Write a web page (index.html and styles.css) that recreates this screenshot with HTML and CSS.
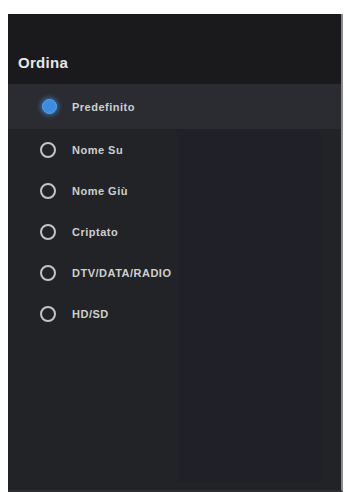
FILE: index.html
```html
<!DOCTYPE html>
<html lang="it">
<head>
<meta charset="utf-8">
<link rel="stylesheet" href="styles.css">
</head>
<body>
<div class="panel">
  <div class="header"><span class="title">Ordina</span></div>
  <div class="body">
    <div class="shade"></div>
    <ul class="list">
      <li class="row selected"><span class="radio on"></span><span class="label">Predefinito</span></li>
      <li class="row"><span class="radio"></span><span class="label">Nome Su</span></li>
      <li class="row"><span class="radio"></span><span class="label">Nome Giù</span></li>
      <li class="row"><span class="radio"></span><span class="label">Criptato</span></li>
      <li class="row"><span class="radio"></span><span class="label">DTV/DATA/RADIO</span></li>
      <li class="row"><span class="radio"></span><span class="label">HD/SD</span></li>
    </ul>
  </div>
</div>
</body>
</html>
```
FILE: styles.css
```css
html, body {
  margin: 0;
  padding: 0;
  background: #ffffff;
  height: 100%;
}
body {
  font-family: "Liberation Sans", Arial, sans-serif;
  padding: 14px 5px 0 8px;
  box-sizing: border-box;
}
.panel {
  height: 476px;
  background: #222326;
  border-right: 2px solid #8a8b8f;
  border-bottom: 2px solid #2c2d30;
  display: flex;
  flex-direction: column;
}
.header {
  height: 70px;
  background: #1a1a1d;
  display: flex;
  align-items: flex-end;
  padding: 0 0 13px 10px;
  box-sizing: border-box;
}
.title {
  color: #e6e6e6;
  font-weight: bold;
  font-size: 15px;
  letter-spacing: 0.3px;
}
.body {
  flex: 1;
  position: relative;
}
.shade {
  position: absolute;
  left: 169px;
  right: 20px;
  top: 0;
  bottom: 8px;
  background: #202128;
}
.list {
  position: relative;
  list-style: none;
  margin: 0;
  padding: 0;
}
.row {
  height: 41px;
  display: flex;
  align-items: center;
  padding-left: 32px;
}
.row.selected {
  height: 45px;
  background: #2a2c31;
}
.radio {
  width: 12px;
  height: 12px;
  border: 2.5px solid #c4c4c4;
  border-radius: 50%;
  flex: none;
}
.radio.on {
  width: 13px;
  height: 13px;
  margin: 2px;
  border: 1px solid #5aa5f0;
  background: #3c8de0;
  box-shadow: 0 0 4px 2px rgba(60, 140, 225, 0.55);
}
.label {
  margin-left: 16px;
  color: #cfcfcf;
  font-size: 11px;
  font-weight: bold;
  letter-spacing: 0.5px;
}
.radio.on + .label {
  margin-left: 13px;
}
```
